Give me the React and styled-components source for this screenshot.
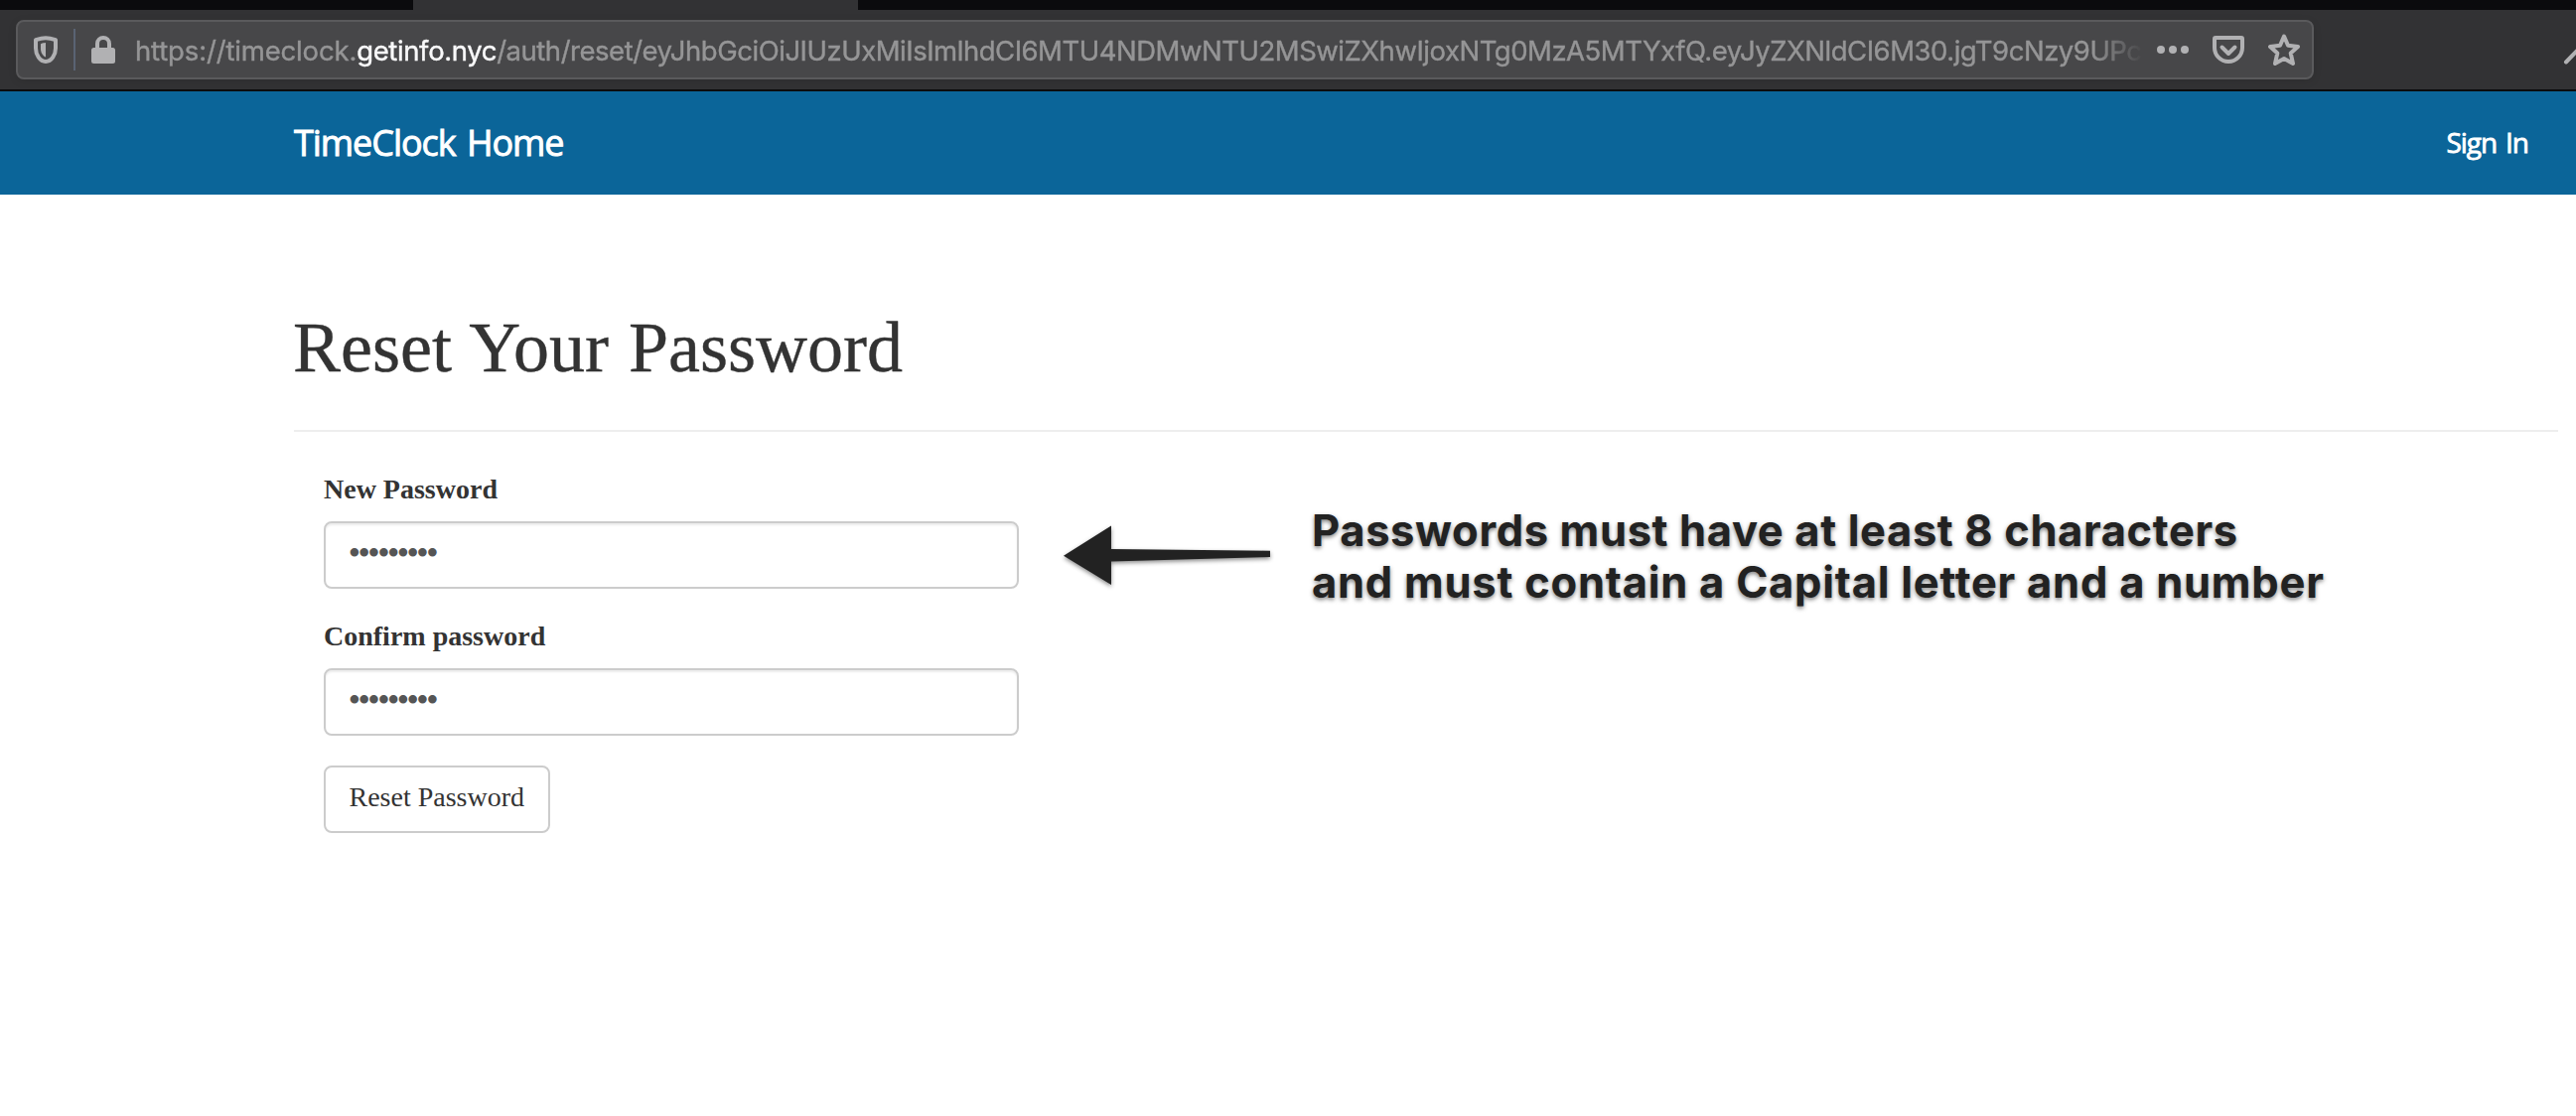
import React from "react";
import styled, { createGlobalStyle } from "styled-components";

const GlobalStyle = createGlobalStyle`
  *, *::before, *::after { box-sizing: border-box; }
  body {
    margin: 0;
    background: #fff;
    color: #333;
    font-family: "Liberation Serif", "Times New Roman", serif;
    font-size: 28px;
    line-height: 40px;
    overflow: hidden;
  }
`;

const Screen = styled.div`
  min-height: 1124px;
  display: flex;
  flex-direction: column;
`;

const TabStrip = styled.div`
  height: 10px;
  padding-left: 416px;
  background: #0b0b0d;
`;

const ActiveTab = styled.div`
  width: 448px;
  height: 10px;
  background: #323234;
`;

const Toolbar = styled.div`
  display: flex;
  align-items: center;
  justify-content: space-between;
  height: 82px;
  padding-left: 16px;
  background: #323234;
  border-bottom: 2px solid #0c0c0d;
`;

const UrlBar = styled.div`
  display: flex;
  align-items: center;
  width: 2314px;
  height: 60px;
  padding: 0 12px 0 16px;
  background: #474749;
  border: 2px solid #5a5a5c;
  border-radius: 8px;
  box-shadow: 0 2px 8px rgba(0, 0, 0, 0.1);
`;

const Icon = styled.svg`
  display: block;
  flex: none;
  margin-left: ${(p) => p.$gap || 0}px;
  fill: none;
  stroke: #b1b1b3;
  stroke-linecap: round;
  stroke-linejoin: round;
`;

const Divider = styled.span`
  flex: none;
  width: 2px;
  height: 42px;
  margin: 0 16px;
  background: #5a6373;
`;

const Url = styled.div`
  flex: none;
  width: 2022px;
  margin-left: 20px;
  padding-top: 1px;
  overflow: hidden;
  white-space: nowrap;
  color: #959596;
  font: 27.5px/56px Inter, "Liberation Sans", sans-serif;
  -webkit-text-stroke: 0.4px;
  mask-image: linear-gradient(to right, #000 1970px, transparent 2022px);
`;

const UrlPart = styled.span`
  letter-spacing: ${(p) => p.$tracking}px;
  color: ${(p) => (p.$strong ? "#f9f9fa" : "inherit")};
`;

const Navbar = styled.nav`
  display: flex;
  justify-content: space-between;
  height: 104px;
  padding: 0 48px 0 296px;
  background: #0b6599;
`;

const NavLink = styled.a`
  color: #fff;
  font-family: "Open Sans", "Noto Sans", sans-serif;
  font-weight: 500;
  font-size: ${(p) => (p.$brand ? 36 : 28)}px;
  line-height: ${(p) => (p.$brand ? 104 : 102)}px;
  letter-spacing: ${(p) => (p.$brand ? -1.05 : -1)}px;
  word-spacing: ${(p) => (p.$brand ? 3 : 2.5)}px;
  -webkit-text-stroke: ${(p) => (p.$brand ? 0.9 : 0.8)}px;
`;

const Page = styled.main`
  padding: 114px 18px 0 296px;
`;

const Heading = styled.h1`
  margin: 0;
  padding-bottom: 43px;
  border-bottom: 2px solid #eee;
  font-weight: 400;
  font-size: 72px;
  line-height: 80px;
  text-indent: -1px;
  word-spacing: 2px;
  -webkit-text-stroke: 0.4px;
`;

const Content = styled.div`
  display: flex;
  align-items: flex-start;
  padding: 38px 0 0 30px;
`;

const Form = styled.form`
  flex: none;
  width: 700px;
`;

const Field = styled.div`
  margin-bottom: 28px;
`;

const Label = styled.label`
  display: block;
  margin-bottom: 12px;
  font-weight: 700;
`;

const Input = styled.input`
  display: block;
  width: 100%;
  height: 68px;
  padding: 10px 24px 14px;
  border: 2px solid #ccc;
  border-radius: 8px;
  background: #fff;
  box-shadow: inset 0 2px 2px rgba(0, 0, 0, 0.075);
  color: #555;
  font: inherit;
  -webkit-text-stroke: 1.8px #555;
`;

const Button = styled.button`
  display: block;
  height: 68px;
  margin-top: 30px;
  padding: 10px 24px 14px 23.5px;
  border: 2px solid #ccc;
  border-radius: 8px;
  background: #fff;
  color: #333;
  font: inherit;
`;

const Arrow = styled.svg`
  flex: none;
  margin: 47px 0 0 40px;
  fill: #222;
  filter: drop-shadow(0 2px 2px rgba(0, 0, 0, 0.45));
`;

const Note = styled.p`
  margin: 35px 0 0 35px;
  color: #222;
  font: 700 43.5px/52px Inter, "Liberation Sans", sans-serif;
  text-shadow: 0 2px 4px rgba(0, 0, 0, 0.5);
  white-space: nowrap;
`;

const NoteLine = styled.span`
  display: block;
  letter-spacing: ${(p) => p.$tracking}px;
`;

const fields = [
  { id: "new-password", label: "New Password" },
  { id: "confirm-password", label: "Confirm password" },
];

function ShieldIcon() {
  return (
    <Icon width="24" height="28" viewBox="0 0 24 28">
      <path strokeWidth="4" d="M2 4.2C5 3.2 8 2.2 12 2.2s7 1 10 2v8.3C22 19 18 26 12 26S2 19 2 12.500z" />
      <path fill="#b1b1b3" stroke="none" d="M12 7v14.500c-3-1.200-5-4.500-5-8.500V8.200C8.500 7.500 10 7.100 12 7z" />
    </Icon>
  );
}

function LockIcon() {
  return (
    <Icon width="24" height="28" viewBox="0 0 24 28">
      <path strokeWidth="4" strokeLinecap="butt" d="M6 13V8a6 6 0 0 1 12 0v5" />
      <rect x="0" y="12" width="24" height="16" rx="2.500" fill="#b1b1b3" stroke="none" />
    </Icon>
  );
}

function MoreIcon() {
  return (
    <Icon width="32" height="8" viewBox="0 0 32 8" $gap={14}>
      {[4, 16, 28].map((x) => (
        <circle key={x} cx={x} cy="4" r="4" fill="#b1b1b3" stroke="none" />
      ))}
    </Icon>
  );
}

function PocketIcon() {
  return (
    <Icon width="32" height="28" viewBox="0 0 32 28" $gap={24}>
      <path strokeWidth="4" d="M3 2h26a1 1 0 0 1 1 1v9a14 14 0 0 1-28 0V3a1 1 0 0 1 1-1z" />
      <path strokeWidth="4" d="M9.500 11.500l6.500 6.500 6.500-6.500" />
    </Icon>
  );
}

function StarIcon() {
  return (
    <Icon width="32" height="32" viewBox="0 0 32 32" $gap={24}>
      <path
        strokeWidth="4"
        d="M16 2.500l4 9.300 10 1.200-7.300 6.500 2.300 10.500-9-5-9 5 2.300-10.500L2 13l10-1.200z"
      />
    </Icon>
  );
}

function ToolIcon() {
  return (
    <Icon width="14" height="30" viewBox="0 0 14 30">
      <path strokeWidth="4" d="M4 27.500L22 9" />
    </Icon>
  );
}

export default function App() {
  return (
    <Screen>
      <GlobalStyle />
      <TabStrip>
        <ActiveTab />
      </TabStrip>
      <Toolbar>
        <UrlBar>
          <ShieldIcon />
          <Divider />
          <LockIcon />
          <Url>
            <UrlPart $tracking={-0.16}>https://timeclock.</UrlPart>
            <UrlPart $tracking={-0.37} $strong>getinfo.nyc</UrlPart>
            <UrlPart $tracking={-0.48}>
              /auth/reset/eyJhbGciOiJIUzUxMiIsImlhdCI6MTU4NDMwNTU2MSwiZXhwIjoxNTg0MzA5MTYxfQ.eyJyZXNldCI6M30.jgT9cNzy9UPc
            </UrlPart>
          </Url>
          <MoreIcon />
          <PocketIcon />
          <StarIcon />
        </UrlBar>
        <ToolIcon />
      </Toolbar>
      <Navbar>
        <NavLink $brand>TimeClock Home</NavLink>
        <NavLink>Sign In</NavLink>
      </Navbar>
      <Page>
        <Heading>Reset Your Password</Heading>
        <Content>
          <Form>
            {fields.map((field) => (
              <Field key={field.id}>
                <Label htmlFor={field.id}>{field.label}</Label>
                <Input id={field.id} type="text" defaultValue="•••••••••" />
              </Field>
            ))}
            <Button type="button">Reset Password</Button>
          </Form>
          <Arrow width="220" height="80" viewBox="0 0 220 80">
            <path d="M5 39.700L53 9.500V33L213 34.700V41L53 45.500V69z" />
          </Arrow>
          <Note>
            <NoteLine $tracking={0.62}>Passwords must have at least 8 characters</NoteLine>
            <NoteLine $tracking={0.75}>and must contain a Capital letter and a number</NoteLine>
          </Note>
        </Content>
      </Page>
    </Screen>
  );
}
